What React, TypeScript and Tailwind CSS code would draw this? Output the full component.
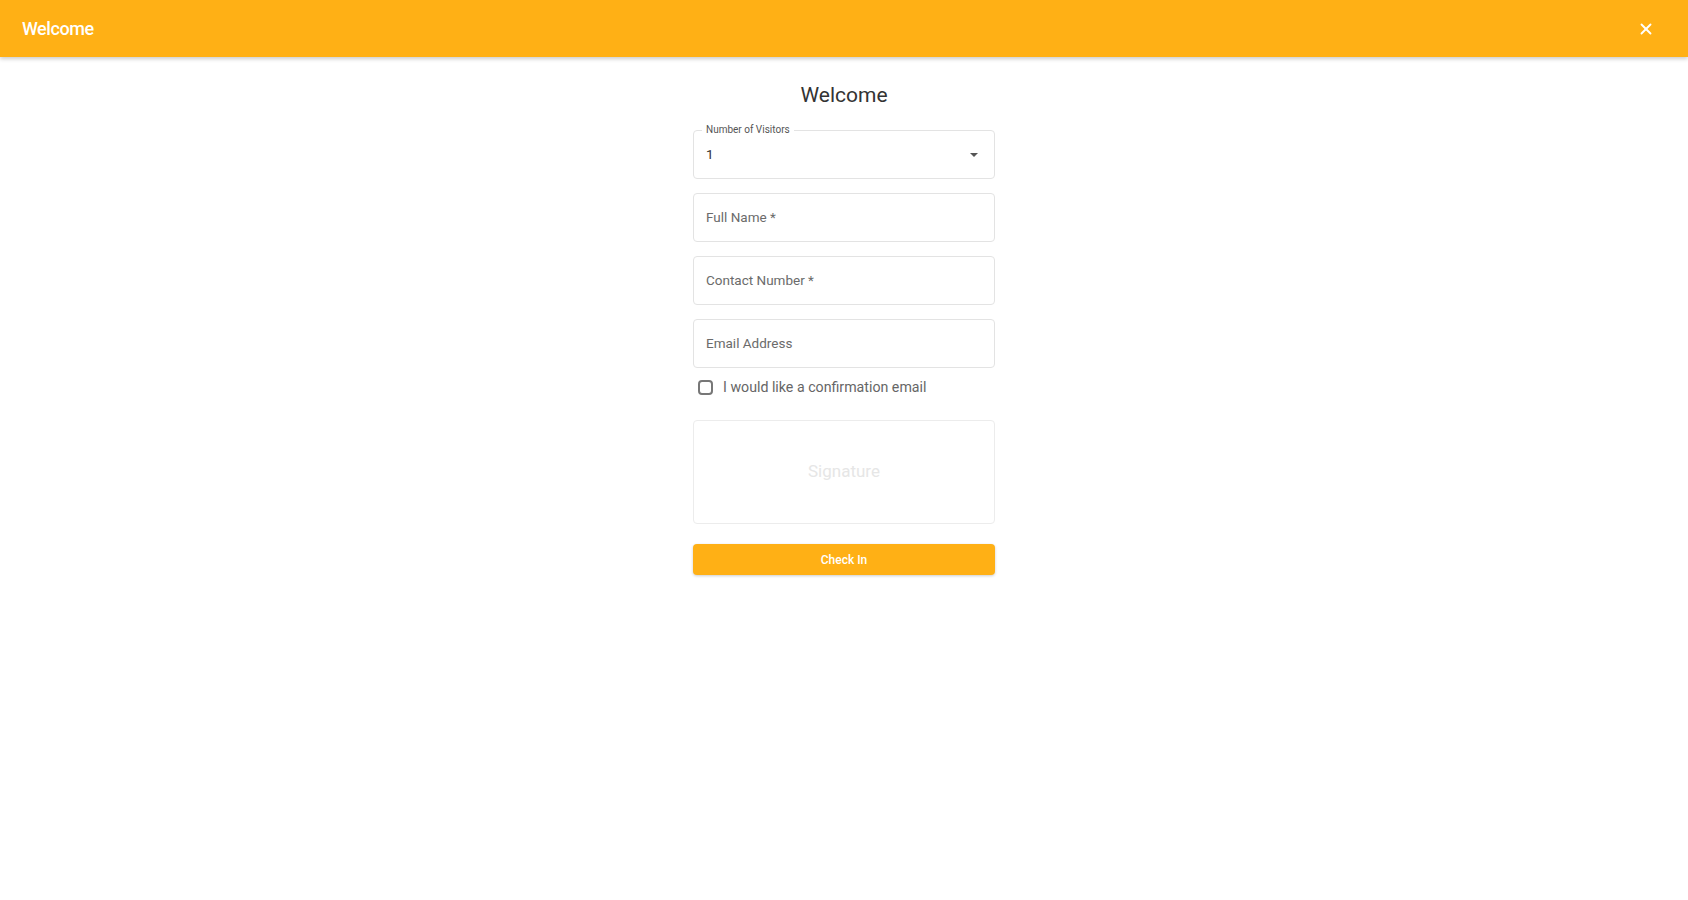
import { X } from 'lucide-react';

function Field({ label }: { label: string }) {
  return (
    <div className="h-[49px] rounded border border-[#e3e3e3] flex items-center px-3">
      <span className="text-[13.5px] text-[#6b6b6b]">{label}</span>
    </div>
  );
}

export default function App() {
  return (
    <div className="min-h-screen bg-white font-['Roboto',sans-serif]">
      <header className="h-[57px] bg-[#ffb015] shadow-[0_2px_4px_rgba(0,0,0,0.2)] flex items-center justify-between pl-[22px] pr-[33px]">
        <h1 className="text-[18px] font-medium text-white tracking-tight">Welcome</h1>
        <button className="text-white">
          <X size={18} strokeWidth={2.5} />
        </button>
      </header>

      <main className="flex flex-col items-center pt-[22px]">
        <h2 className="text-[21px] leading-8 text-[#333]">Welcome</h2>

        <form className="w-[302px] mt-[19px] flex flex-col">
          <div className="relative h-[49px] rounded border border-[#e3e3e3] flex items-center justify-between px-3">
            <span className="absolute -top-[7px] left-2 bg-white px-1 text-[10px] leading-3 text-[#555]">
              Number of Visitors
            </span>
            <span className="text-[13.5px] text-[#333]">1</span>
            <svg width="8" height="4" viewBox="0 0 8 4" className="mr-1">
              <path d="M0 0 L8 0 L4 4 Z" fill="#555" />
            </svg>
          </div>

          <div className="mt-[14px] flex flex-col gap-[14px]">
            <Field label="Full Name *" />
            <Field label="Contact Number *" />
            <Field label="Email Address" />
          </div>

          <label className="mt-[9px] flex items-center gap-[10px] pl-[5px]">
            <span className="w-[15px] h-[15px] rounded-sm border-2 border-[#777]" />
            <span className="text-[14.2px] leading-5 text-[#666]">I would like a confirmation email</span>
          </label>

          <div className="mt-[23px] h-[104px] rounded-sm border border-[#ececec] flex items-center justify-center">
            <span className="text-[17px] text-[#e6e6e6]">Signature</span>
          </div>

          <button
            type="button"
            className="mt-[20px] h-[31px] rounded bg-[#ffb015] shadow-[0_1px_3px_rgba(0,0,0,0.2)] text-[12px] font-medium text-white"
          >
            Check In
          </button>
        </form>
      </main>
    </div>
  );
}
